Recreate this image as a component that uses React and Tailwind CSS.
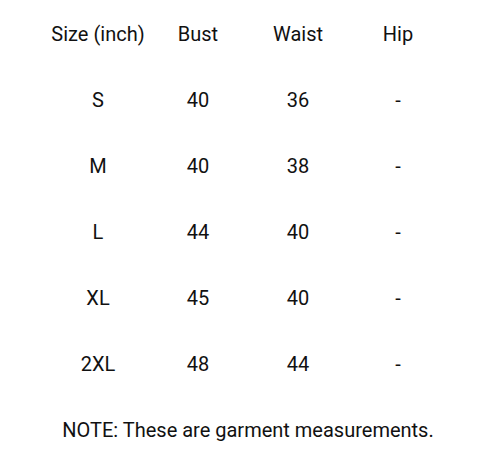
import React from "react";

const ROWS = [
  ["S", "40", "36", "-"],
  ["M", "40", "38", "-"],
  ["L", "44", "40", "-"],
  ["XL", "45", "40", "-"],
  ["2XL", "48", "44", "-"],
];

const Cell = ({ children }) => (
  <div className="flex h-[66px] w-[100px] items-center justify-center">{children}</div>
);

const App = () => {
  return (
    <div
      className="h-[470px] w-[480px] bg-white pt-[1px] pl-[48px] text-[20px] text-[#111]"
      style={{ fontFamily: "Roboto, 'Open Sans', sans-serif" }}
    >
      <div className="flex">
        <Cell>Size (inch)</Cell>
        <Cell>Bust</Cell>
        <Cell>Waist</Cell>
        <Cell>Hip</Cell>
      </div>
      {ROWS.map((r) => (
        <div key={r[0]} className="flex">
          {r.map((v, i) => (
            <Cell key={i}>{v}</Cell>
          ))}
        </div>
      ))}
      <div className="flex h-[66px] w-[400px] items-center justify-center">
        NOTE: These are garment measurements.
      </div>
    </div>
  );
};

export default App;
